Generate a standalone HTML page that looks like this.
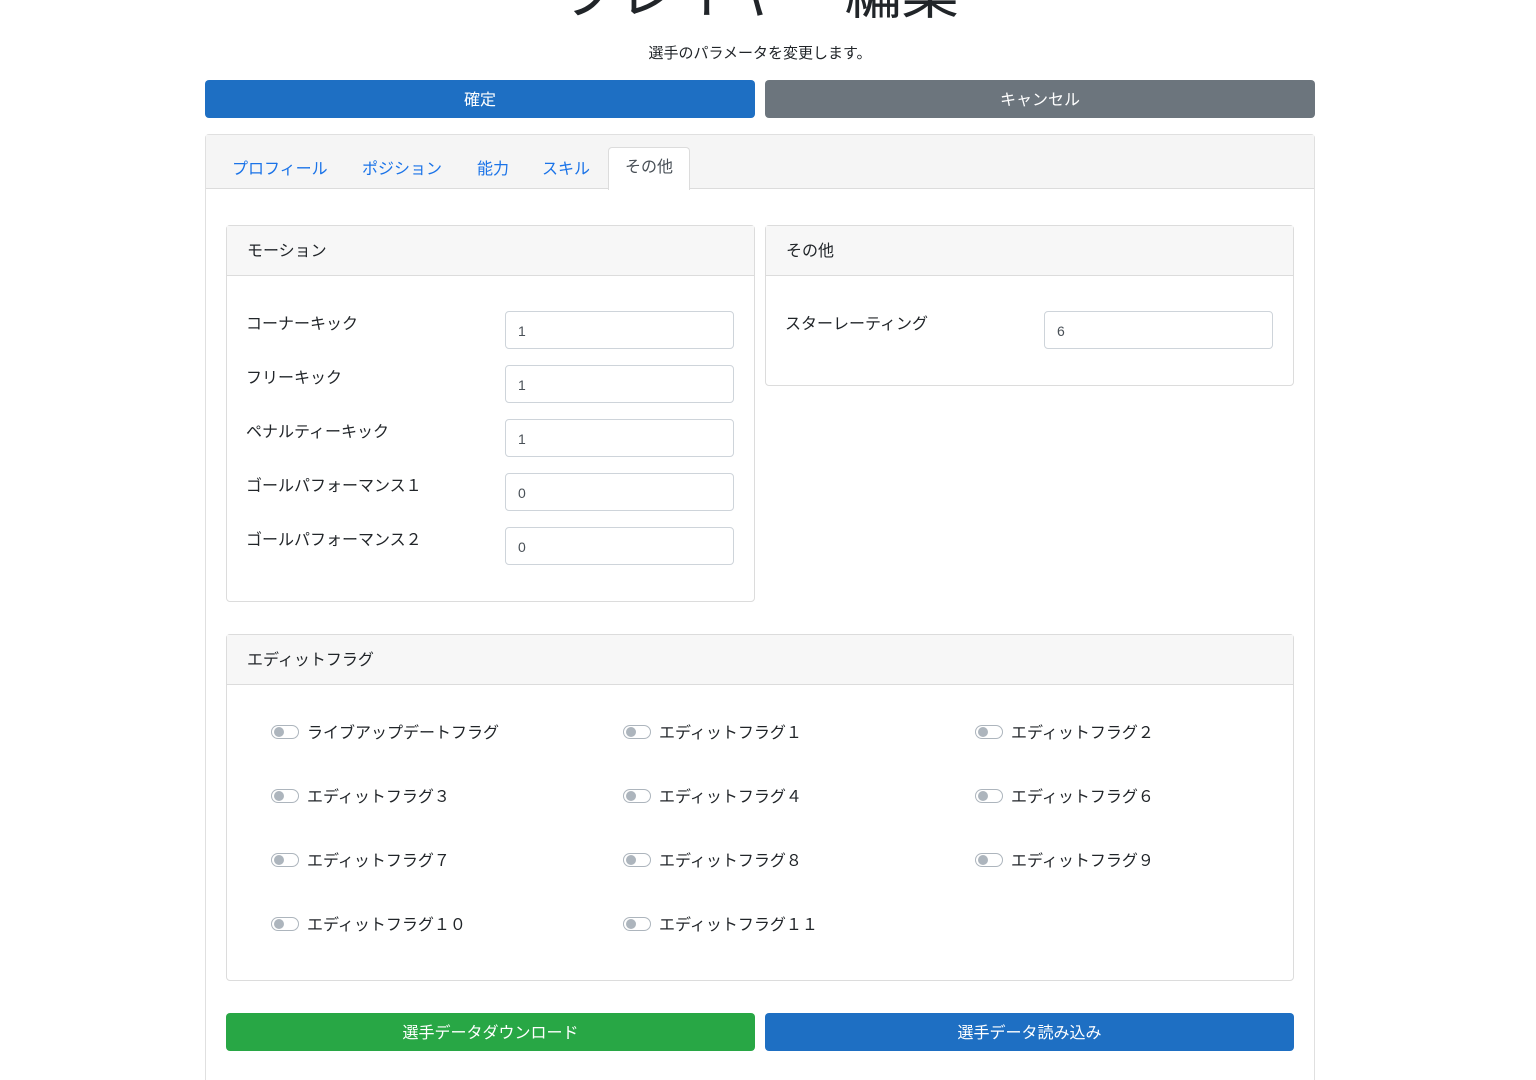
<!DOCTYPE html>
<html><head><meta charset="utf-8"><style>
*{box-sizing:border-box;margin:0;padding:0}
html,body{width:1536px;height:1080px;overflow:hidden}
body{background:#fff;font-family:"Liberation Sans","Noto Sans CJK JP",sans-serif;color:#212529;position:relative;font-size:16px}
.a{position:absolute}
.btn{position:absolute;color:#fff;border-radius:4px;text-align:center;font-size:16px;line-height:41px;height:38px}
.card{position:absolute;border:1px solid #dcdcdc;border-radius:4px;background:#fff}
.ch{height:50px;background:#f7f7f7;border-bottom:1px solid #dcdcdc;padding-left:20px;line-height:51px;font-size:16px}
.lbl{position:absolute;font-size:16px}
.inp{position:absolute;width:229px;height:38px;border:1px solid #ced4da;border-radius:4px;font-size:14px;padding-left:12px;line-height:38px;color:#495057}
.sw{position:absolute;width:28px;height:14px;border:1px solid #adb5bd;border-radius:8px}
.sw:after{content:"";position:absolute;left:2px;top:1px;width:10px;height:10px;border-radius:50%;background:#adb5bd}
.fl{position:absolute;font-size:16px;color:#212529}
</style></head><body>
<div class="a" style="left:0;width:1520px;top:-36px;text-align:center;font-size:57px;font-weight:normal;line-height:60px">プレイヤー編集</div>
<div class="a" style="left:0;width:1520px;top:42px;text-align:center;font-size:15px">選手のパラメータを変更します。</div>
<div class="btn" style="left:205px;top:80px;width:550px;background:#1e6fc3">確定</div>
<div class="btn" style="left:765px;top:80px;width:550px;background:#6c757d">キャンセル</div>
<div class="card" style="left:205px;top:134px;width:1110px;height:960px;border-color:#e0e0e0">
 <div style="height:54px;background:#f5f5f5;border-bottom:1px solid #dcdcdc;position:relative">
  <span class="a" style="left:26px;top:20px;color:#1a73e8">プロフィール</span>
  <span class="a" style="left:156px;top:20px;color:#1a73e8">ポジション</span>
  <span class="a" style="left:271px;top:20px;color:#1a73e8">能力</span>
  <span class="a" style="left:336px;top:20px;color:#1a73e8">スキル</span>
  <div class="a" style="left:402px;top:12px;width:82px;height:43px;background:#fff;border:1px solid #dcdcdc;border-bottom:none;border-radius:4px 4px 0 0;text-align:center;line-height:40px;color:#495057">その他</div>
 </div>
</div>
<div class="card" style="left:226px;top:225px;width:529px;height:377px"><div class="ch">モーション</div></div>
<div class="lbl" style="left:246px;top:310px">コーナーキック</div><div class="inp" style="left:505px;top:311px">1</div>
<div class="lbl" style="left:246px;top:364px">フリーキック</div><div class="inp" style="left:505px;top:365px">1</div>
<div class="lbl" style="left:246px;top:418px">ペナルティーキック</div><div class="inp" style="left:505px;top:419px">1</div>
<div class="lbl" style="left:246px;top:472px">ゴールパフォーマンス１</div><div class="inp" style="left:505px;top:473px">0</div>
<div class="lbl" style="left:246px;top:526px">ゴールパフォーマンス２</div><div class="inp" style="left:505px;top:527px">0</div>
<div class="card" style="left:765px;top:225px;width:529px;height:161px"><div class="ch">その他</div></div>
<div class="lbl" style="left:785px;top:310px">スターレーティング</div><div class="inp" style="left:1044px;top:311px">6</div>
<div class="card" style="left:226px;top:634px;width:1068px;height:347px"><div class="ch">エディットフラグ</div></div>
<div class="sw" style="left:271px;top:725px"></div><div class="fl" style="left:307px;top:719px">ライブアップデートフラグ</div>
<div class="sw" style="left:623px;top:725px"></div><div class="fl" style="left:659px;top:719px">エディットフラグ１</div>
<div class="sw" style="left:975px;top:725px"></div><div class="fl" style="left:1011px;top:719px">エディットフラグ２</div>
<div class="sw" style="left:271px;top:789px"></div><div class="fl" style="left:307px;top:783px">エディットフラグ３</div>
<div class="sw" style="left:623px;top:789px"></div><div class="fl" style="left:659px;top:783px">エディットフラグ４</div>
<div class="sw" style="left:975px;top:789px"></div><div class="fl" style="left:1011px;top:783px">エディットフラグ６</div>
<div class="sw" style="left:271px;top:853px"></div><div class="fl" style="left:307px;top:847px">エディットフラグ７</div>
<div class="sw" style="left:623px;top:853px"></div><div class="fl" style="left:659px;top:847px">エディットフラグ８</div>
<div class="sw" style="left:975px;top:853px"></div><div class="fl" style="left:1011px;top:847px">エディットフラグ９</div>
<div class="sw" style="left:271px;top:917px"></div><div class="fl" style="left:307px;top:911px">エディットフラグ１０</div>
<div class="sw" style="left:623px;top:917px"></div><div class="fl" style="left:659px;top:911px">エディットフラグ１１</div>
<div class="btn" style="left:226px;top:1013px;width:529px;background:#28a745">選手データダウンロード</div>
<div class="btn" style="left:765px;top:1013px;width:529px;background:#1e6fc3">選手データ読み込み</div>
</body></html>
